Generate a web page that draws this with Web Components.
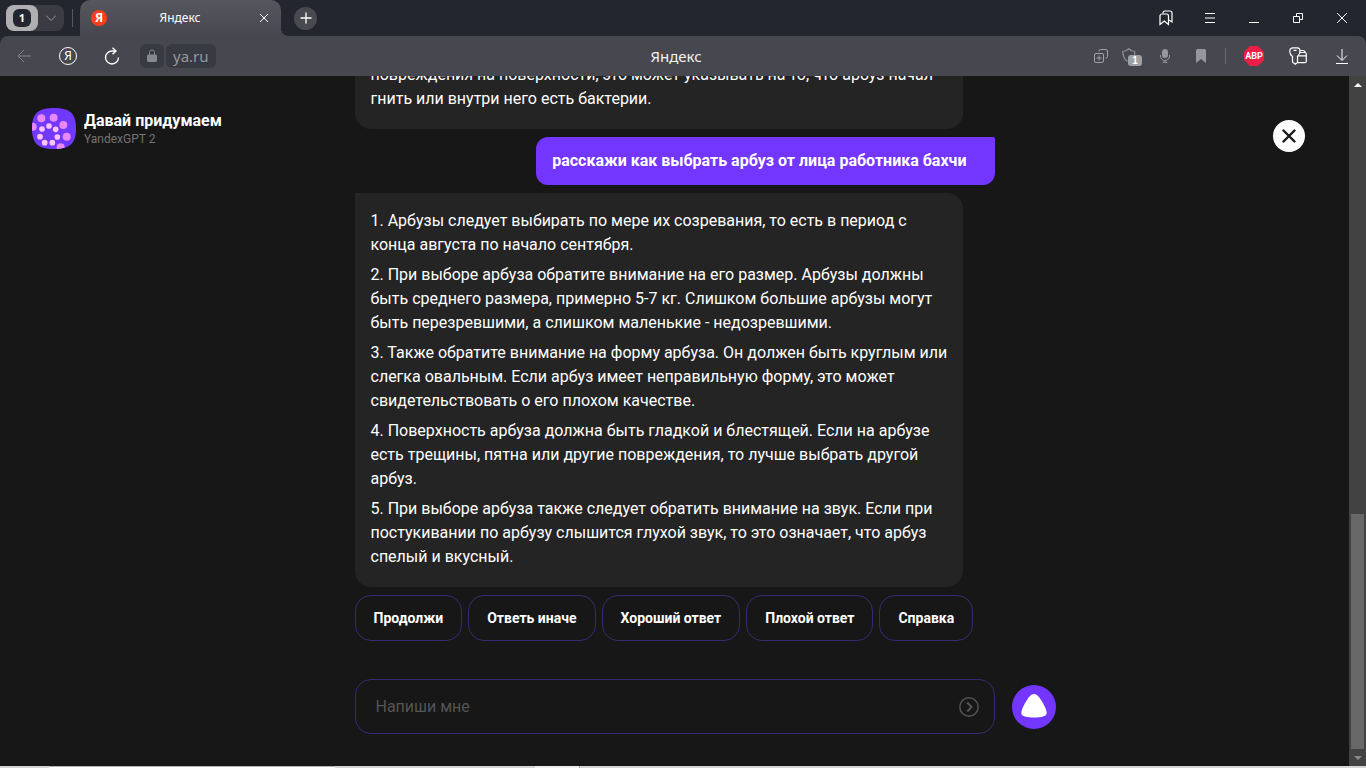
<!DOCTYPE html>
<html lang="ru">
<head>
<meta charset="utf-8">
<title>Яндекс</title>
<style>
html, body { height: 100%; }
body { margin: 0; background: #171717; color: #fff; font: 16px/24px Roboto, "Noto Sans", sans-serif; overflow: hidden; }
</style>
</head>
<body>
<browser-shell>
  <tab-bar slot="tabs"></tab-bar>
  <tool-bar slot="tools"></tool-bar>
  <chat-page>
    <chat-message>
      <p>повреждения на поверхности, это может указывать на то, что арбуз начал<br>гнить или внутри него есть бактерии.</p>
    </chat-message>
    <chat-message from="user"><p>расскажи как выбрать арбуз от лица работника бахчи</p></chat-message>
    <chat-message>
      <p>1. Арбузы следует выбирать по мере их созревания, то есть в период с<br>конца августа по начало сентября.</p>
      <p>2. При выборе арбуза обратите внимание на его размер. Арбузы должны<br>быть среднего размера, примерно 5-7 кг. Слишком большие арбузы могут<br>быть перезревшими, а слишком маленькие - недозревшими.</p>
      <p>3. Также обратите внимание на форму арбуза. Он должен быть круглым или<br>слегка овальным. Если арбуз имеет неправильную форму, это может<br>свидетельствовать о его плохом качестве.</p>
      <p>4. Поверхность арбуза должна быть гладкой и блестящей. Если на арбузе<br>есть трещины, пятна или другие повреждения, то лучше выбрать другой<br>арбуз.</p>
      <p>5. При выборе арбуза также следует обратить внимание на звук. Если при<br>постукивании по арбузу слышится глухой звук, то это означает, что арбуз<br>спелый и вкусный.</p>
    </chat-message>
    <reply-chip slot="chips">Продолжи</reply-chip>
    <reply-chip slot="chips">Ответь иначе</reply-chip>
    <reply-chip slot="chips">Хороший ответ</reply-chip>
    <reply-chip slot="chips">Плохой ответ</reply-chip>
    <reply-chip slot="chips">Справка</reply-chip>
    <prompt-box slot="prompt"></prompt-box>
  </chat-page>
</browser-shell>
<script>
const define = (name, html, setup) => customElements.define(name, class extends HTMLElement {
  connectedCallback() {
    if (this.shadowRoot) return;
    const root = this.attachShadow({ mode: 'open' });
    root.innerHTML = html;
    if (setup) setup(this, root);
  }
});

const reset = `
  *, ::before, ::after { box-sizing: border-box; }
  button { padding: 0; border: 0; background: none; color: inherit; font: inherit; cursor: pointer; display: flex; align-items: center; justify-content: center; flex: none; }
  svg { display: block; flex: none; }`;

const icons = {
  chevron: [10, 6, '<path d="M0 .5l5 5 5-5" stroke="#96979c"/>'],
  close: [10, 10, '<path d="M1 1l8 8M9 1L1 9"/>'],
  winClose: [12, 12, '<path d="M1 1l10 10M11 1L1 11"/>'],
  plus: [12, 12, '<path d="M6 .5v11M.5 6h11" stroke-width="1.300"/>'],
  bookmarks: [14, 16, '<path d="M4 3.500V3a2 2 0 0 1 2-2h5a2 2 0 0 1 2 2v9l-3-2" stroke-width="1.200"/><path d="M1 14.500V6a2 2 0 0 1 2-2h4.500a2 2 0 0 1 2 2v8.500L5.250 11z" stroke-width="1.200"/>'],
  menu: [12, 10, '<path d="M1 .5h10M1 5h10M1 9.500h10"/>'],
  minimize: [10, 10, '<path d="M0 9.500h10"/>'],
  restore: [12, 12, '<path d="M1.500 4.500h6v6h-6zM4.500 4.500v-3h6v6h-3"/>'],
  back: [14, 14, '<path d="M14 7H1M7 1L1 7l6 6" stroke="#85868c"/>'],
  reload: [16, 18, '<path d="M14.500 10.500a6.500 6.500 0 1 1-6.500-6.500h4M8.500 .7L12 4 8.500 7.300" stroke-width="1.400"/>'],
  lock: [10, 14, '<rect y="5.500" width="10" height="7.500" rx="1.500" fill="#85878d" stroke="none"/><path d="M2.500 6V3.500a2.500 2.500 0 0 1 5 0V6" stroke="#85878d"/>'],
  copy: [14, 14, '<g stroke="#a0a1a6"><rect x=".5" y="4.500" width="9" height="9" rx="1.500"/><path d="M5 2.500V2A1.500 1.500 0 0 1 6.500.5h5.500a1.500 1.500 0 0 1 1.500 1.500v5.500a1.500 1.500 0 0 1-1.500 1.500h-.5M5 6.500v5M2.500 9h5"/></g>'],
  shield: [14, 16, '<path d="M5.500 13.500C2 11 .8 8.500.8 3.500 3.500 3.500 5 2.500 6.800.8c1.800 1.700 3.300 2.700 6 2.700 0 2 0 3.500-.6 5" stroke="#8d8e94" stroke-width="1.200"/>'],
  mic: [10, 14, '<rect x="2" y="0" width="6" height="9" rx="3" fill="#96979c" stroke="none"/><path d="M.5 6v1a4.500 4.500 0 0 0 9 0V6M5 11.500v1.500M2.500 13.300h5" stroke="#96979c"/>'],
  bookmark: [10, 14, '<path d="M0 1.500A1.500 1.500 0 0 1 1.500 0h7A1.500 1.500 0 0 1 10 1.500V14L5 10l-5 4z" fill="#96979c" stroke="none"/>'],
  keys: [18, 18, '<path d="M3.500 9.500C1.500 8 .8 6 .8 4.500.8 2 2 .8 4 .8h4.500c1.800 0 2.500 1.200 2.500 3.200 0 2.300-.7 4-2.500 5.500v6L6.200 17.200 3.500 15zM4.500 3.300h3" stroke-width="1.200"/><path d="M11 3.500h3a2 2 0 0 1 2 2M9 8.800h8.300v5.400a1.500 1.500 0 0 1-1.500 1.500H9M17.300 8.800V7a1.500 1.500 0 0 0-1.500-1.500h-5" stroke-width="1.200"/>'],
  download: [14, 16, '<path d="M7 1v11M2 7.500L7 12.500l5-5M1 15.500h12"/>'],
  pageClose: [14, 14, '<path d="M1.500 1.500l11 11M12.500 1.500l-11 11" stroke="#171717" stroke-width="2.400" stroke-linecap="round"/>'],
  send: [20, 20, '<g stroke="#545454" stroke-width="1.500"><circle cx="10" cy="10" r="9.200"/><path d="M8.200 5.500L12.500 10l-4.300 4.500" stroke-width="2"/></g>'],
  alice: [44, 44, '<circle cx="22" cy="22" r="22" fill="#7236ff" stroke="none"/><path d="M22 9c-3 0-5.500 3.500-8 7.500-2.500 4-4.700 9-4.700 11.500C9.300 31.500 15 32.500 22 32.500s12.700-1 12.700-4.500c0-2.500-2.200-7.500-4.700-11.500C27.500 12.500 25 9 22 9z" fill="#fff" stroke="none"/>'],
  logo: [44, 41, `<svg width="44" height="41" viewBox="0 0 132 123"><clipPath id="c"><path d="M66 0c50 0 66 18 66 61.500S116 123 66 123 0 105 0 61.500 16 0 66 0z"/></clipPath><g clip-path="url(#c)" stroke="none"><rect width="132" height="123" fill="#7138ff"/><g fill="#e988fb"><circle cx="28" cy="31" r="12"/><circle cx="65" cy="29" r="12"/><circle cx="94" cy="51" r="12"/><circle cx="104" cy="86" r="12"/><circle cx="86" cy="118" r="12"/><circle cx="2" cy="56" r="12"/></g><g fill="#ffc2fb"><circle cx="51" cy="54" r="8.500"/><circle cx="71" cy="64" r="8.500"/><circle cx="76" cy="87" r="8.500"/><circle cx="61" cy="104" r="8.500"/><circle cx="38" cy="104" r="8.500"/><circle cx="24" cy="86" r="8.500"/><circle cx="30" cy="63" r="8.500"/></g></g></svg>`],
  up: [8, 4, '<path d="M0 4l4-4 4 4z" fill="#fff" stroke="none"/>'],
  down: [8, 4, '<path d="M0 0h8L4 4z" fill="#8a8a8a" stroke="none"/>']
};

define('ui-icon', '<style>:host{display:block;flex:none}svg{display:block}</style>', (host, root) => {
  const [w, h, body] = icons[host.getAttribute('name')];
  root.innerHTML += `<svg width="${w}" height="${h}" viewBox="0 0 ${w} ${h}" fill="none" stroke="currentColor" aria-hidden="true">${body}</svg>`;
});

define('browser-shell', `<style>${reset}
  :host { display: flex; flex-direction: column; height: 100vh; }
  .view { flex: 1; min-height: 0; display: flex; }
  ::slotted(chat-page) { flex: 1; min-width: 0; }
</style>
<slot name="tabs"></slot><slot name="tools"></slot>
<div class="view"><slot></slot><page-scrollbar></page-scrollbar></div>
<window-edge></window-edge>`);

define('window-edge', `<style>
  :host { display: flex; flex: none; height: 2px; background: #d5d5d5; }
  i { flex: none; }
  .sheet { width: 286px; margin-left: 49px; border-top: 1px solid #b5b5b5; background: #fff; box-sizing: border-box; }
  .light { width: 44px; margin-left: 200px; background: #eee; }
  .tick { width: 1px; background: #aaa; }
</style><i class="sheet"></i><i class="light"></i><i class="tick"></i>`);

define('tab-bar', `<style>${reset}
  :host { display: flex; flex: none; align-items: center; height: 36px; padding: 0 2px 0 6px; background: #23262e; font: 12px/16px "Noto Sans", sans-serif; }
  .group { display: flex; width: 58px; height: 26px; border-radius: 8px; background: #3b3c43; }
  .count { width: 32px; height: 26px; border-radius: 8px; background: #b0b0b2; }
  .count b { width: 18px; height: 18px; border-radius: 6px; background: #23262e; font: 700 11px/18px "Noto Sans", sans-serif; }
  .more { flex: 1; }
  .rule { width: 1px; height: 18px; margin: 0 7px 0 8px; background: #55575d; }
  .tab { position: relative; display: flex; align-items: center; width: 201px; height: 36px; padding: 0 12px 0 11px; border-radius: 10px 10px 0 0; background: linear-gradient(#56575d, #47474f); }
  .tab::after { content: ""; position: absolute; left: 100%; bottom: 0; width: 8px; height: 8px; background: radial-gradient(circle at 8px 0, #23262e 8px, #47474f 8px); }
  .fav { width: 16px; height: 16px; border-radius: 50%; background: #fc3f1d; font: 700 12px/16px "Noto Sans", sans-serif; text-align: center; }
  .name { flex: 1; padding-right: 6px; text-align: center; }
  .new { width: 23px; height: 23px; margin-left: 13px; border-radius: 50%; background: #494a50; }
  .win { display: flex; margin-left: auto; }
  .win button { width: 44px; height: 36px; }
</style>
<div class="group"><button class="count" aria-label="Группа вкладок"><b>1</b></button><button class="more" aria-label="Список вкладок"><ui-icon name="chevron"></ui-icon></button></div>
<span class="rule"></span>
<div class="tab"><span class="fav">Я</span><span class="name">Яндекс</span><button aria-label="Закрыть вкладку"><ui-icon name="close"></ui-icon></button></div>
<button class="new" aria-label="Новая вкладка"><ui-icon name="plus"></ui-icon></button>
<div class="win">
  <button aria-label="Закладки"><ui-icon name="bookmarks"></ui-icon></button>
  <button aria-label="Меню"><ui-icon name="menu"></ui-icon></button>
  <button aria-label="Свернуть"><ui-icon name="minimize"></ui-icon></button>
  <button aria-label="Развернуть"><ui-icon name="restore"></ui-icon></button>
  <button aria-label="Закрыть"><ui-icon name="winClose"></ui-icon></button>
</div>`);

define('tool-bar', `<style>${reset}
  :host { display: block; flex: none; background: #23262e; font: 15px/24px "Noto Sans", sans-serif; }
  .bar { display: grid; grid-template-columns: 1fr auto 1fr; align-items: center; height: 40px; padding: 0 2px; border-radius: 8px 8px 0 0; background: #47474f; }
  .side { display: flex; align-items: center; }
  .side.end { justify-content: flex-end; }
  .nav { width: 44px; height: 40px; }
  .ring { width: 18px; height: 18px; border: 1px solid #fff; border-radius: 50%; font: 12px/16px "Noto Sans", sans-serif; text-align: center; }
  .lock, .host { height: 24px; border-radius: 6px; background: #383a42; }
  .lock { width: 24px; margin-left: 6px; }
  .host { margin-left: 2px; padding: 0 7px; color: #96989e; text-decoration: none; }
  .title { padding-right: 14px; color: #f2f2f3; }
  .small { width: 32px; height: 40px; }
  .guard { position: relative; width: 28px; padding-right: 8px; margin-left: 2px; }
  .guard b { position: absolute; left: 9px; top: 19px; width: 14px; height: 11px; border-radius: 3px; background: #a0a1a4; font: 700 10px/11px "Liberation Sans", sans-serif; }
  .mic, .mark { width: 36px; }
  .rule { width: 1px; height: 16px; margin: 0 6px; background: #6a6b72; }
  .abp { width: 20px; height: 20px; background: #ed1e45; clip-path: polygon(30% 0, 70% 0, 100% 30%, 100% 70%, 70% 100%, 30% 100%, 0 70%, 0 30%); font: 700 9px/20px Roboto, sans-serif; }
</style>
<div class="bar">
  <div class="side">
    <button class="nav" aria-label="Назад"><ui-icon name="back"></ui-icon></button>
    <button class="nav" aria-label="Домой"><span class="ring">Я</span></button>
    <button class="nav" aria-label="Обновить"><ui-icon name="reload"></ui-icon></button>
    <button class="lock" aria-label="О сайте"><ui-icon name="lock"></ui-icon></button>
    <a class="host" href="#">ya.ru</a>
  </div>
  <span class="title">Яндекс</span>
  <div class="side end">
    <button class="small" aria-label="Копировать"><ui-icon name="copy"></ui-icon></button>
    <button class="small guard" aria-label="Защита"><ui-icon name="shield"></ui-icon><b>1</b></button>
    <button class="small mic" aria-label="Голосовой поиск"><ui-icon name="mic"></ui-icon></button>
    <button class="small mark" aria-label="В закладки"><ui-icon name="bookmark"></ui-icon></button>
    <span class="rule"></span>
    <button class="nav" aria-label="Блокировщик рекламы"><span class="abp">ABP</span></button>
    <button class="nav" aria-label="Пароли и карты"><ui-icon name="keys"></ui-icon></button>
    <button class="nav" aria-label="Загрузки"><ui-icon name="download"></ui-icon></button>
  </div>
</div>`);

define('page-scrollbar', `<style>
  :host { display: flex; flex: none; flex-direction: column; align-items: center; width: 17px; background: #424242; }
  .arrow { display: flex; align-items: center; justify-content: center; flex: none; height: 17px; }
  .before { flex: 421; }
  .thumb { flex: 235; width: 13px; background: #686868; }
</style>
<span class="arrow"><ui-icon name="up"></ui-icon></span><span class="before"></span><span class="thumb"></span><span class="arrow"><ui-icon name="down"></ui-icon></span>`);

define('chat-page', `<style>${reset}
  :host { display: grid; grid-template-columns: 1fr minmax(0, 640px) 1fr; background: #171717; overflow: hidden; }
  .brand { display: flex; align-items: flex-start; gap: 8px; padding: 32px 0 0 32px; }
  h1, h2 { margin: 0; }
  h1 { padding-top: 2px; font: 700 16px/22px Roboto, "Noto Sans", sans-serif; }
  h2 { font: 400 12px/14px Roboto, "Noto Sans", sans-serif; color: #747474; }
  .talk { display: flex; flex-direction: column; justify-content: flex-end; min-height: 0; padding-bottom: 32px; }
  .log { display: flex; flex-direction: column; flex: none; gap: 8px; }
  .chips { display: flex; flex: none; gap: 6px; margin: 8px 0 38px; }
  .side { display: flex; flex-direction: column; justify-content: space-between; align-items: flex-start; padding: 44px 44px 37px 17px; }
  .close { align-self: flex-end; width: 32px; height: 32px; border-radius: 50%; background: #fff; }
</style>
<header class="brand"><ui-icon name="logo"></ui-icon><div><h1>Давай придумаем</h1><h2>YandexGPT 2</h2></div></header>
<main class="talk"><div class="log"><slot></slot></div><div class="chips"><slot name="chips"></slot></div><slot name="prompt"></slot></main>
<aside class="side"><button class="close" aria-label="Закрыть чат"><ui-icon name="pageClose"></ui-icon></button><button aria-label="Алиса"><ui-icon name="alice"></ui-icon></button></aside>`);

define('chat-message', `<style>${reset}
  :host { display: flex; flex-direction: column; flex: none; gap: 6px; box-sizing: border-box; width: 95%; padding: 16px 16px 18px; border-radius: 0 16px 16px 16px; background: #242424; white-space: nowrap; }
  :host([from="user"]) { align-self: flex-end; width: auto; padding: 12px 28px 12px 16px; border-radius: 12px 2px 12px 12px; background: #7236ff; font-weight: 700; }
  ::slotted(p) { margin: 0; }
</style><slot></slot>`);

define('reply-chip', `<style>${reset}
  :host { display: block; flex: none; }
  button { height: 46px; padding: 0 18px; border: 1px solid #382a70; border-radius: 16px; font: 700 14px/20px Roboto, "Noto Sans", sans-serif; color: #fff; white-space: nowrap; }
</style><button type="button"><slot></slot></button>`);

define('prompt-box', `<style>${reset}
  :host { display: block; flex: none; }
  form { display: flex; align-items: center; height: 55px; padding: 0 15px 0 20px; border: 1px solid #382a70; border-radius: 16px; }
  input { flex: 1; min-width: 0; height: 24px; padding: 0; border: 0; outline: 0; background: none; color: #fff; font: 16px/24px Roboto, "Noto Sans", sans-serif; }
  input::placeholder { color: #545454; opacity: 1; }
</style><form><input type="text" placeholder="Напиши мне" aria-label="Сообщение"><button type="button" aria-label="Отправить"><ui-icon name="send"></ui-icon></button></form>`);
</script>
</body>
</html>
